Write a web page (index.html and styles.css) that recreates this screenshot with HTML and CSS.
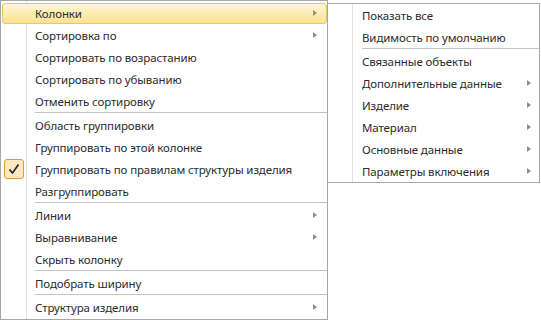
FILE: index.html
```html
<!DOCTYPE HTML>
<html>
<head>
    <title>Column menu</title>
    <link rel="stylesheet" href="styles.css">
</head>
<body>
    <div class="menus">
        <div class="menu mainMenu">
            <div class="item active"><span class="label">Колонки</span><span class="arrow"></span></div>
            <div class="item"><span class="label">Сортировка по</span><span class="arrow"></span></div>
            <div class="item"><span class="label">Сортировать по возрастанию</span></div>
            <div class="item"><span class="label">Сортировать по убыванию</span></div>
            <div class="item"><span class="label">Отменить сортировку</span></div>
            <div class="sep"></div>
            <div class="item"><span class="label">Область группировки</span></div>
            <div class="item"><span class="label">Группировать по этой колонке</span></div>
            <div class="item checked"><span class="checkBox"><svg width="12" height="12" viewBox="0 0 12 12"><path d="M1.5 6.5 L4.5 10 L10.5 1.5" fill="none" stroke="#1c1c3c" stroke-width="1.6"/></svg></span><span class="label">Группировать по правилам структуры изделия</span></div>
            <div class="item"><span class="label">Разгруппировать</span></div>
            <div class="sep"></div>
            <div class="item"><span class="label">Линии</span><span class="arrow"></span></div>
            <div class="item"><span class="label">Выравнивание</span><span class="arrow"></span></div>
            <div class="item"><span class="label">Скрыть колонку</span></div>
            <div class="sep"></div>
            <div class="item"><span class="label">Подобрать ширину</span></div>
            <div class="sep"></div>
            <div class="item"><span class="label">Структура изделия</span><span class="arrow"></span></div>
        </div>

        <div class="menu subMenu">
            <div class="item"><span class="label">Показать все</span></div>
            <div class="item"><span class="label">Видимость по умолчанию</span></div>
            <div class="sep"></div>
            <div class="item"><span class="label">Связанные объекты</span></div>
            <div class="item"><span class="label">Дополнительные данные</span><span class="arrow"></span></div>
            <div class="item"><span class="label">Изделие</span><span class="arrow"></span></div>
            <div class="item"><span class="label">Материал</span><span class="arrow"></span></div>
            <div class="item"><span class="label">Основные данные</span><span class="arrow"></span></div>
            <div class="item"><span class="label">Параметры включения</span><span class="arrow"></span></div>
        </div>
    </div>
</body>
</html>
```

FILE: styles.css
```css
body {
    margin: 0;
    background-color: #ffffff;
    font-family: "Noto Sans", "Open Sans", sans-serif;
    font-size: 11.5px;
    letter-spacing: -0.12px;
    color: #2b2b2b;
}

.menus {
    display: flex;
    align-items: flex-start;
}

.menu {
    position: relative;
    box-sizing: border-box;
    background-color: #ffffff;
    border: 1px solid #a7a7a7;
}

.mainMenu {
    width: 328px;
    height: 320px;
    padding: 1px 0;
}

.subMenu {
    width: 213px;
    height: 180px;
    margin-top: 3px;
    margin-left: -1px;
    padding: 0;
}

/* the grey line of the icon column */
.menu::before {
    content: "";
    position: absolute;
    top: 0;
    bottom: 0;
    left: 25px;
    border-left: 1px solid #e2e2e2;
}

.subMenu::before {
    left: 24px;
}

.item {
    position: relative;
    display: flex;
    align-items: center;
    height: 22px;
    padding-left: 34px;
    padding-right: 10px;
}

.subMenu .item {
    padding-right: 8px;
}

.label {
    flex: 1;
    white-space: nowrap;
}

.arrow {
    width: 0;
    height: 0;
    border-left: 4px solid #8e8e8e;
    border-top: 3.5px solid transparent;
    border-bottom: 3.5px solid transparent;
}

.active::after {
    content: "";
    position: absolute;
    top: 1px;
    bottom: 0;
    left: 1px;
    right: 0;
    border: 1px solid #e8c66c;
    border-radius: 3px;
    background: linear-gradient(#fef6d6, #fde38f);
    z-index: 0;
}

.active .label,
.active .arrow {
    position: relative;
    z-index: 1;
}

.mainMenu .checked {
    padding-left: 3px;
}

.checkBox {
    position: relative;
    z-index: 1;
    display: flex;
    align-items: center;
    justify-content: center;
    box-sizing: border-box;
    flex: none;
    width: 20px;
    height: 20px;
    margin-right: 11px;
    border: 1px solid #d99b42;
    border-radius: 3px;
    background-color: #fce8bd;
}

.sep {
    height: 1px;
    margin: 0 0 1px 34px;
    background-color: #c4c4c4;
}
```
